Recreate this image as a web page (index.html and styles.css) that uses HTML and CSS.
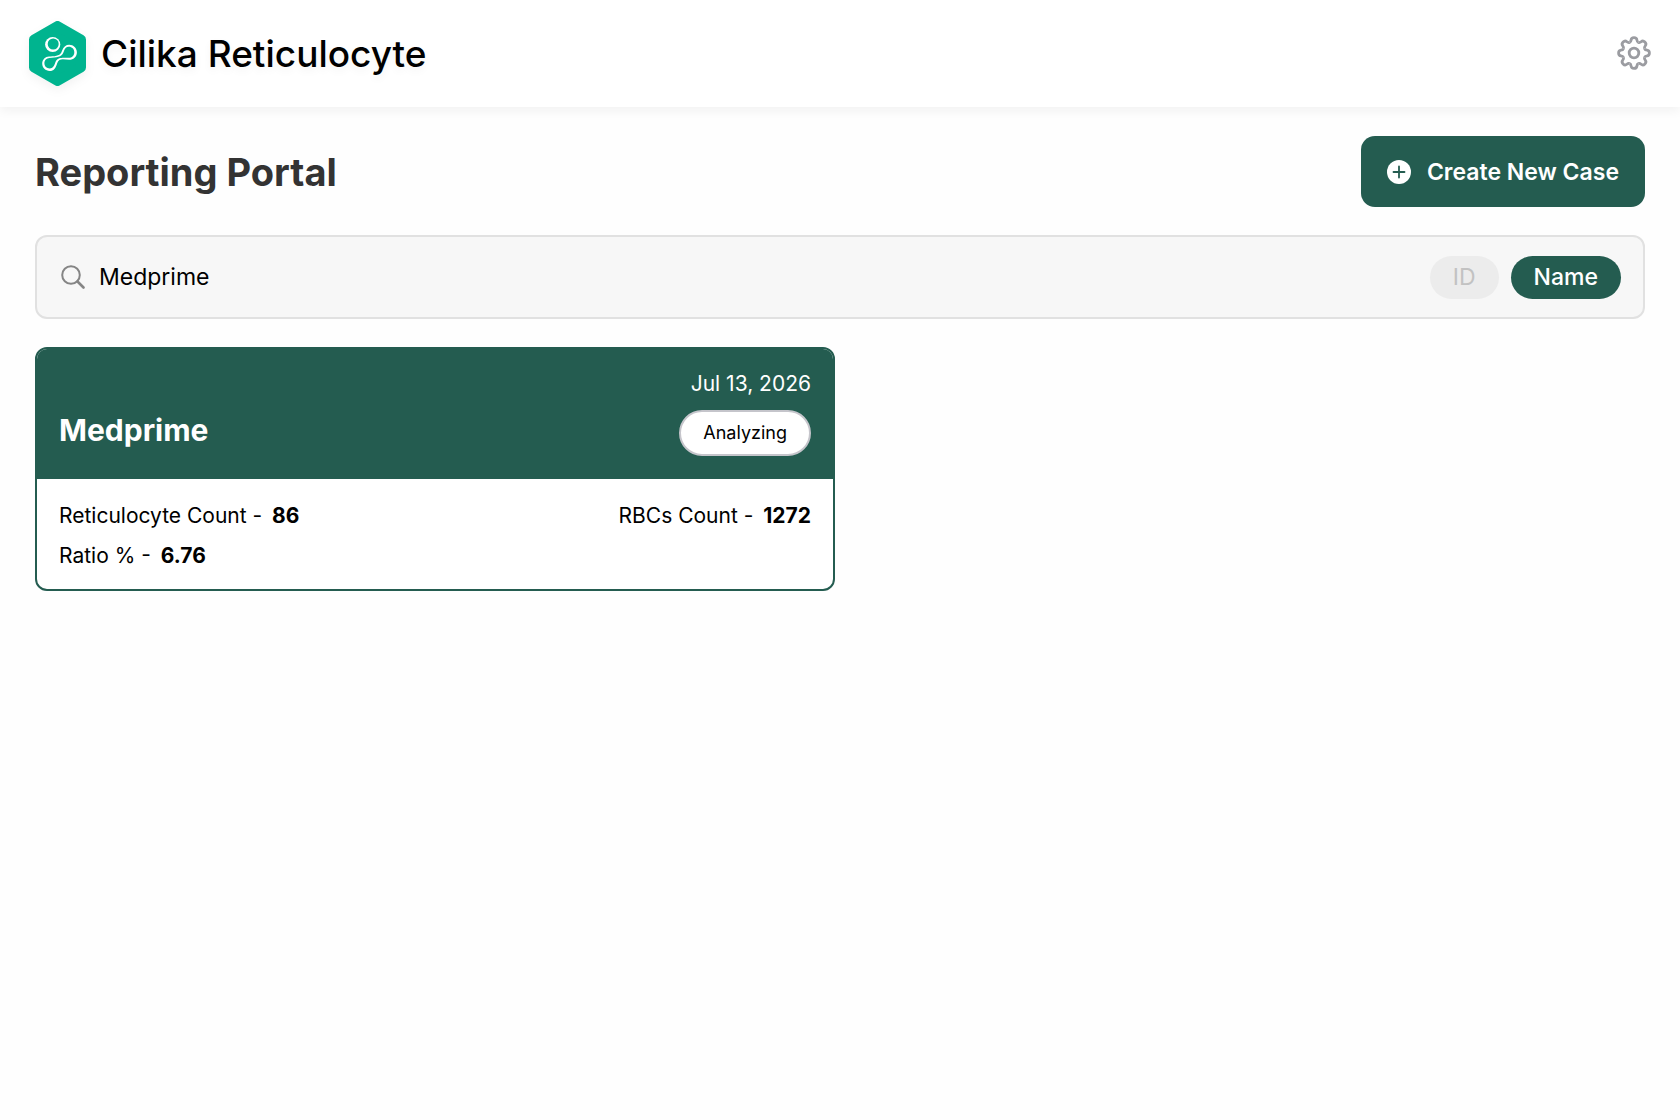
FILE: index.html
```html
<!DOCTYPE html>
<html lang="en">
<head>
    <meta charset="UTF-8">
    <meta name="viewport" content="width=device-width, initial-scale=1.0">
    <title>Cilika Reticulocyte</title>
    <link rel="stylesheet" href="styles.css">
</head>
<body>
    <header class="topbar">
        <div class="brand">
            <svg class="logo" viewBox="0 0 57 65" aria-hidden="true">
                <path d="M28.5 5 L52 18.5 V46.5 L28.5 60 L5 46.5 V18.5 Z" fill="#00b48f" stroke="#00b48f" stroke-width="10" stroke-linejoin="round"/>
                <!-- white blobs with the green cut out slightly off centre -->
                <circle cx="23.7" cy="23.5" r="7.6" fill="#fff"/>
                <circle cx="24.2" cy="23" r="5.5" fill="#00b48f"/>
                <path d="M20 35.4 C27 35.5 31.5 35 33 29.8 C34.6 25.6 37 23.8 40.2 23.8 C44.4 23.8 47.9 27.2 47.9 31.4 C47.9 35.5 44.4 38.8 40.2 38.8 C34.5 38.4 30.2 36.7 28.2 42.2 C26.7 47.2 24.8 50 20.7 50 C16.5 50 13.2 46.8 13.2 42.6 C13.2 38.5 16.4 35.5 20 35.4 Z" fill="#fff"/>
                <path d="M20.5 37.1 C27.5 36 32.6 36.6 34.5 31.2 C35.7 27.5 37.2 25.8 39.8 25.8 C43 25.8 45.3 28.1 45.3 31.2 C45.3 34.4 43 36.8 39.8 36.8 C34 37 28.8 35.6 26.4 41.2 C25 45.2 23.8 47.4 20.8 47.4 C17.6 47.4 15.4 45.2 15.4 42.2 C15.4 39.4 17.6 37.4 20.5 37.1 Z" fill="#00b48f"/>
            </svg>
            <span class="brand-name">Cilika Reticulocyte</span>
        </div>
        <button class="settings" aria-label="Settings">
            <svg viewBox="-18 -18 36 36" width="36" height="36" fill="none" stroke="#9b9ca1" stroke-width="2.8">
                <defs>
                    <path id="tooth" d="M-4.4 -10.6 C-3.2 -11.1 -3 -12 -2.9 -13 Q-2.7 -15.4 0 -15.4 Q2.7 -15.4 2.9 -13 C3 -12 3.2 -11.1 4.4 -10.6"/>
                </defs>
                <use href="#tooth"/>
                <use href="#tooth" transform="rotate(45)"/>
                <use href="#tooth" transform="rotate(90)"/>
                <use href="#tooth" transform="rotate(135)"/>
                <use href="#tooth" transform="rotate(180)"/>
                <use href="#tooth" transform="rotate(225)"/>
                <use href="#tooth" transform="rotate(270)"/>
                <use href="#tooth" transform="rotate(315)"/>
                <circle r="4.8"/>
            </svg>
        </button>
    </header>

    <main class="content">
        <div class="title-row">
            <h1>Reporting Portal</h1>
            <button class="create">
                <svg viewBox="0 0 24 24" width="24" height="24" aria-hidden="true">
                    <circle cx="12" cy="12" r="12" fill="#fff"/>
                    <path d="M12 6.5 V17.5 M6.5 12 H17.5" stroke="#245c50" stroke-width="1.8" stroke-linecap="round"/>
                </svg>
                Create New Case
            </button>
        </div>

        <div class="search">
            <svg viewBox="0 0 24 24" width="24" height="24" fill="none" stroke="#858585" stroke-linecap="round" aria-hidden="true">
                <circle cx="10" cy="10" r="8.8" stroke-width="2"/>
                <path d="M16.5 16.5 L22.5 22.5" stroke-width="2.6"/>
            </svg>
            <input type="text" class="search-input" value="Medprime" aria-label="Search cases">
            <button class="pill">ID</button>
            <button class="pill active">Name</button>
        </div>

        <div class="cases">
            <article class="case">
                <div class="case-head">
                    <h2>Medprime</h2>
                    <div class="case-status">
                        <span class="date">Jul 13, 2026</span>
                        <span class="badge">Analyzing</span>
                    </div>
                </div>
                <div class="case-body">
                    <p>Reticulocyte Count - <strong>86</strong></p>
                    <p>RBCs Count - <strong>1272</strong></p>
                    <p>Ratio % - <strong>6.76</strong></p>
                </div>
            </article>
        </div>
    </main>
</body>
</html>
```
FILE: styles.css
```css
* {
    box-sizing: border-box;
}

body {
    margin: 0;
    font-family: Inter, "Liberation Sans", sans-serif;
    background-color: #fefefe;
    color: #000;
}

h1, h2, p {
    margin: 0;
}

button {
    font-family: inherit;
    border: none;
    cursor: pointer;
}

.topbar {
    display: flex;
    justify-content: space-between;
    align-items: center;
    height: 107px;
    padding: 0 28px 1px 29px;
    background-color: #fff;
    box-shadow: 0 4px 10px rgba(0, 0, 0, 0.05);
}

.brand {
    display: flex;
    align-items: center;
    gap: 15px;
}

.logo {
    width: 57px;
    height: 65px;
    filter: drop-shadow(0 4px 5px rgba(0, 0, 0, 0.05));
}

.brand-name {
    font-size: 37px;
    font-weight: 500;
    text-shadow: 0 4px 8px rgba(0, 0, 0, 0.05);
}

.settings {
    display: flex;
    padding: 0;
    background: none;
}

.content {
    display: flex;
    flex-direction: column;
    gap: 28px;
    padding: 29px 35px;
}

.title-row {
    display: flex;
    justify-content: space-between;
    align-items: center;
}

h1 {
    font-size: 38px;
    font-weight: 700;
    color: #333;
}

.create {
    display: flex;
    align-items: center;
    gap: 16px;
    height: 71px;
    padding: 0 26px;
    border-radius: 14px;
    background-color: #245c50;
    color: #fff;
    font-size: 23px;
    font-weight: 600;
}

.search {
    display: flex;
    align-items: center;
    gap: 12px;
    height: 84px;
    padding: 0 22px 0 24px;
    border: 2px solid #e1e1e1;
    border-radius: 12px;
    background-color: #f7f7f7;
}

.search-input {
    flex: 1;
    min-width: 0;
    padding: 0 2px;
    border: none;
    outline: none;
    background: none;
    color: #000;
    font-family: inherit;
    font-size: 23px;
}

.pill {
    height: 43px;
    padding: 0 23px;
    border-radius: 22px;
    background-color: #ececec;
    color: #c2c2c2;
    font-size: 23px;
}

.pill.active {
    background-color: #245c50;
    color: #fff;
    font-weight: 500;
}

.cases {
    display: grid;
    grid-template-columns: 1fr 1fr;
    gap: 10px;
}

.case {
    border: 2px solid #245c50;
    border-radius: 12px;
    overflow: hidden;
    background-color: #fff;
}

.case-head {
    display: flex;
    justify-content: space-between;
    align-items: center;
    padding: 21px 22px 23px;
    background-color: #245c50;
    color: #fff;
}

h2 {
    padding-top: 34px;
    font-size: 30px;
    font-weight: 700;
}

.case-status {
    display: flex;
    flex-direction: column;
    align-items: flex-end;
    gap: 12px;
}

.date {
    font-size: 21px;
    line-height: 28px;
}

.badge {
    padding: 9px 22px;
    border: 2px solid #c5c5cb;
    border-radius: 24px;
    background-color: #fff;
    color: #000;
    font-size: 18px;
    line-height: 24px;
}

.case-body {
    display: grid;
    grid-template-columns: auto auto;
    justify-content: space-between;
    row-gap: 12px;
    padding: 23px 22px 19px;
}

.case-body p {
    font-size: 21px;
    line-height: 28px;
}

.case-body strong {
    margin-left: 4px;
    font-weight: 700;
}
```
